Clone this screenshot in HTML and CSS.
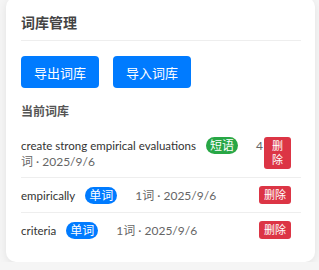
FILE: index.html
```html
<!DOCTYPE html>
<html>
<head>
    <meta charset="utf-8">
    <title>词库管理</title>
    <link rel="stylesheet" href="styles.css">
</head>
<body>
    <div class="card">
        <h2 class="card-title">词库管理</h2>

        <div class="actions">
            <button class="btn btn-primary">导出词库</button>
            <button class="btn btn-primary">导入词库</button>
        </div>

        <h3 class="section-title">当前词库</h3>

        <ul class="vocab-list">
            <li class="vocab-item">
                <div class="vocab-info"><span class="vocab-name">create strong empirical evaluations</span><span class="badge badge-phrase">短语</span><span class="vocab-meta">4词 · 2025/9/6</span></div>
                <button class="btn-delete">删除</button>
            </li>
            <li class="vocab-item">
                <div class="vocab-info"><span class="vocab-name">empirically</span><span class="badge badge-word">单词</span><span class="vocab-meta">1词 · 2025/9/6</span></div>
                <button class="btn-delete">删除</button>
            </li>
            <li class="vocab-item">
                <div class="vocab-info"><span class="vocab-name">criteria</span><span class="badge badge-word">单词</span><span class="vocab-meta">1词 · 2025/9/6</span></div>
                <button class="btn-delete">删除</button>
            </li>
        </ul>
    </div>
</body>
</html>
```

FILE: styles.css
```css
body {
    margin: 0;
    padding: 0 4px 0 6px;
    background-color: #f5f5f5;
    font-family: Lato, 'Noto Sans CJK SC', sans-serif;
    color: #333;
}

.card {
    margin-top: -3px;
    padding: 15px 14px 15px 15px;
    background: #fff;
    border-radius: 10px;
    box-shadow: 0 2px 8px rgba(0, 0, 0, 0.08);
}

.card-title {
    margin: 0;
    padding-bottom: 6px;
    font-size: 14px;
    line-height: 22px;
    font-weight: bold;
    color: #444;
    border-bottom: 1px solid #eee;
}

.actions {
    display: flex;
    gap: 14px;
    margin-top: 15px;
}

.btn {
    height: 32px;
    padding: 0 13px;
    font-family: inherit;
    font-size: 13px;
    border: none;
    border-radius: 4px;
    cursor: pointer;
}

.btn-primary {
    background-color: #007bff;
    color: #fff;
}

.section-title {
    margin: 16px 0 9px;
    font-size: 12px;
    line-height: 16px;
    font-weight: bold;
    color: #555;
}

.vocab-list {
    margin: 0;
    padding: 0;
    list-style: none;
}

.vocab-item {
    display: flex;
    justify-content: space-between;
    align-items: center;
    padding: 8px 10px 8px 0;
    border-bottom: 1px solid #eee;
}

.vocab-item:last-child {
    border-bottom: none;
}

.vocab-info {
    font-size: 12px;
    line-height: 15px;
}

.vocab-name {
    font-size: 11.5px;
    color: #333;
}

.badge {
    display: inline-block;
    margin-left: 10px;
    padding: 0 4px;
    font-size: 12px;
    line-height: 17px;
    color: #fff;
    border-radius: 9px;
}

.badge-phrase {
    background-color: #28a745;
}

.badge-word {
    background-color: #007bff;
}

.vocab-meta {
    margin-left: 18px;
    font-size: 12px;
    color: #666;
}

.btn-delete {
    padding: 2px 5px;
    font-family: inherit;
    font-size: 11px;
    line-height: 14px;
    color: #fff;
    background-color: #dc3545;
    border: none;
    border-radius: 3px;
    cursor: pointer;
}
```
